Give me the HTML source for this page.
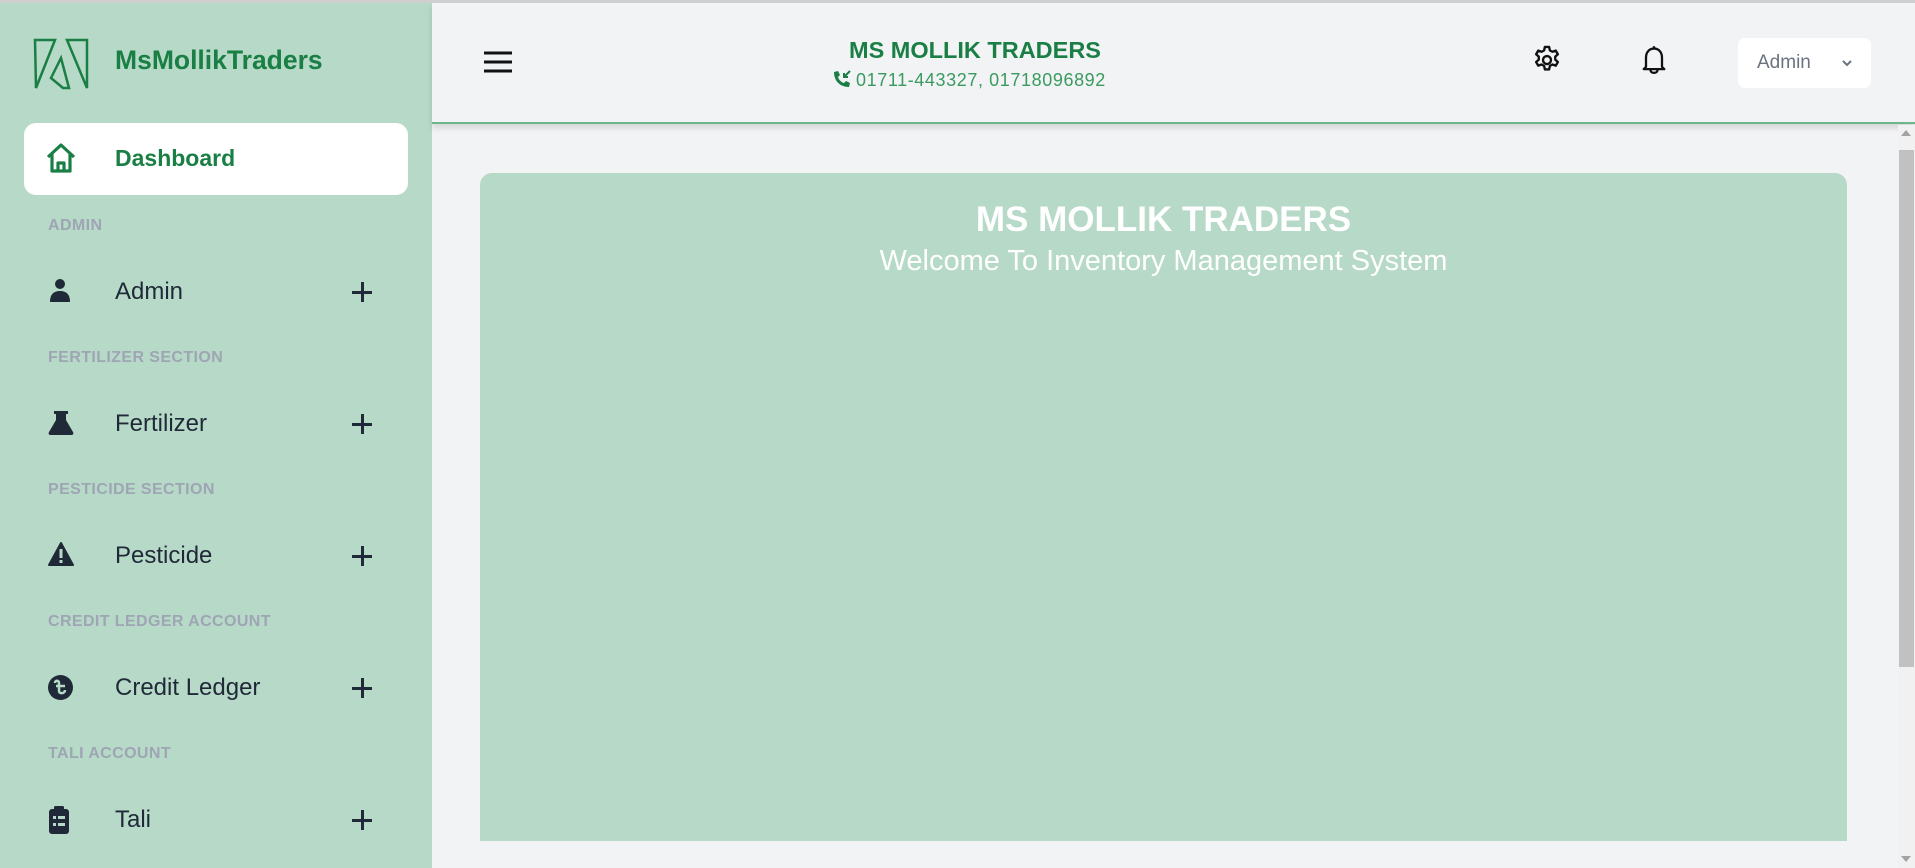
<!DOCTYPE html>
<html><head><meta charset="utf-8"><style>
*{margin:0;padding:0;box-sizing:border-box}
body{width:1915px;height:868px;overflow:hidden;background:#f2f3f5;font-family:"Liberation Sans",sans-serif;position:relative}
.topline{position:absolute;left:0;top:0;width:1915px;height:3px;background:#cfcfcf;z-index:5}
.side{position:absolute;left:0;top:0;width:432px;height:868px;background:#b7d9c8}
.brand{position:absolute;left:115px;top:45px;font-size:26.5px;font-weight:bold;color:#1a7f45}
.dash{position:absolute;left:24px;top:123px;width:384px;height:72px;background:#fff;border-radius:12px}
.dash span{position:absolute;left:91px;top:22px;font-size:23px;font-weight:bold;color:#1a7f45}
.lbl{position:absolute;left:48px;font-size:16px;letter-spacing:.4px;font-weight:bold;color:#9ea5b3}
.item{position:absolute;left:115px;font-size:24px;color:#1f2937}
.plus{position:absolute;left:352px;width:22px;height:22px}
.plus:before{content:"";position:absolute;left:0;top:10px;width:20px;height:2.5px;background:#1f2937}
.plus:after{content:"";position:absolute;left:9px;top:1px;width:2.5px;height:20px;background:#1f2937}
.ic{position:absolute;left:48px}
.head{position:absolute;left:432px;top:3px;width:1483px;height:121px;background:#f2f3f5;border-bottom:2px solid #6bb78a;box-shadow:0 4px 6px rgba(0,0,0,.12)}
.card{position:absolute;left:480px;top:173px;width:1367px;height:668px;background:#b7d9c8;border-radius:12px 12px 0 0;text-align:center;color:#fff}
.sb{position:absolute;left:1898px;top:125px;width:17px;height:743px;background:#f1f1f1}
.thumb{position:absolute;left:1899px;top:150px;width:15px;height:517px;background:#c1c1c1}
</style></head><body>
<div class="topline"></div>
<div class="side">
<svg style="position:absolute;left:33px;top:38px" width="57" height="52" viewBox="0 0 57 52" fill="none" stroke="#1a7f45" stroke-width="2.5"><path d="M2 2H22L3 50Z"/><path d="M34 2H54V50Z"/><path d="M18 40L28 20L36 50H30Z"/></svg>
<div class="brand">MsMollikTraders</div>
<div class="dash">
<svg style="position:absolute;left:21px;top:19px" width="32" height="32" viewBox="0 0 32 32" fill="none" stroke="#1a7f45" stroke-width="3.2" stroke-linejoin="round"><path d="M3 15L16 3L29 15M7 12V29H25V12M13 29V21H19V29"/></svg>
<span>Dashboard</span></div>

<div class="lbl" style="top:217px">ADMIN</div>
<svg class="ic" style="top:278px" width="24" height="24" viewBox="0 0 24 24" fill="#1f2937"><circle cx="12" cy="6" r="5"/><path d="M2 24C2 16 6 13 12 13S22 16 22 24Z"/></svg>
<div class="item" style="top:278px">Admin</div><div class="plus" style="top:281px"></div>

<div class="lbl" style="top:349px">FERTILIZER SECTION</div>
<svg class="ic" style="top:410px" width="26" height="26" viewBox="0 0 26 26" fill="#1f2937"><path d="M6 1H20V4H18V10L25 22C26 24 25 25 23 25H3C1 25 0 24 1 22L8 10V4H6Z"/></svg>
<div class="item" style="top:410px">Fertilizer</div><div class="plus" style="top:413px"></div>

<div class="lbl" style="top:481px">PESTICIDE SECTION</div>
<svg class="ic" style="top:542px" width="26" height="24" viewBox="0 0 26 24"><path d="M13 1L25 23H1Z" fill="#1f2937" stroke="#1f2937" stroke-width="2" stroke-linejoin="round"/><rect x="11.5" y="7" width="3" height="9" fill="#b7d9c8"/><rect x="11.5" y="18" width="3" height="3" fill="#b7d9c8"/></svg>
<div class="item" style="top:542px">Pesticide</div><div class="plus" style="top:545px"></div>

<div class="lbl" style="top:613px">CREDIT LEDGER ACCOUNT</div>
<svg class="ic" style="top:675px" width="25" height="25" viewBox="0 0 25 25"><circle cx="12.5" cy="12.5" r="12.5" fill="#1f2937"/><path d="M7 8C7 5 11 5 11 8V16C11 19 17 19 17 15M8 11H17" stroke="#b7d9c8" stroke-width="2.5" fill="none"/></svg>
<div class="item" style="top:674px">Credit Ledger</div><div class="plus" style="top:677px"></div>

<div class="lbl" style="top:745px">TALI ACCOUNT</div>
<svg class="ic" style="top:806px" width="22" height="28" viewBox="0 0 22 28"><rect x="1" y="3" width="20" height="25" rx="3" fill="#1f2937"/><rect x="6" y="0" width="10" height="5" rx="1.5" fill="#1f2937"/><g fill="#b7d9c8"><rect x="5" y="10" width="3" height="3"/><rect x="10" y="10" width="7" height="3"/><rect x="5" y="17" width="3" height="3"/><rect x="10" y="17" width="7" height="3"/></g></svg>
<div class="item" style="top:806px">Tali</div><div class="plus" style="top:809px"></div>
</div>

<div class="head">
<svg style="position:absolute;left:52px;top:48px" width="28" height="22" viewBox="0 0 28 22" stroke="#111" stroke-width="3"><path d="M0 2H28M0 11H28M0 20H28"/></svg>
<div style="position:absolute;left:393px;width:300px;top:34px;text-align:center;font-size:23.5px;font-weight:bold;color:#1a7f45">MS MOLLIK TRADERS</div>
<div style="position:absolute;left:400px;top:66px;font-size:18px;letter-spacing:.6px;color:#3a9a5f;white-space:nowrap"><svg width="20" height="20" viewBox="0 0 20 20" style="vertical-align:-3px;margin-right:4px"><path d="M2 3C2 12 8 18 17 18L18 14L14 12L12 14C9 13 7 11 6 8L8 6L6 2Z" fill="#1a7f45"/><path d="M18 2L12 8M12 4V8H16" stroke="#1a7f45" stroke-width="2" fill="none"/></svg>01711-443327, 01718096892</div>
<svg style="position:absolute;left:1100px;top:41px" width="30" height="32" viewBox="0 0 24 24" fill="none" stroke="#111" stroke-width="1.9" stroke-linejoin="round"><path d="M10.3 1.5h3.4l.6 2.8 2 1.1 2.7-.9 1.7 2.9-2.1 1.9v2.4l2.1 1.9-1.7 2.9-2.7-.9-2 1.1-.6 2.8h-3.4l-.6-2.8-2-1.1-2.7.9-1.7-2.9 2.1-1.9V9.3L3.3 7.4 5 4.5l2.7.9 2-1.1z"/><circle cx="12" cy="12" r="3.2"/></svg>
<svg style="position:absolute;left:1208px;top:41px" width="28" height="32" viewBox="0 0 24 28" fill="none" stroke="#111" stroke-width="2" stroke-linejoin="round"><path d="M12 2V4M5 20V12C5 7 8 4 12 4S19 7 19 12V20L21 22H3Z M9 23C9 26 15 26 15 23"/></svg>
<div style="position:absolute;left:1306px;top:35px;width:133px;height:50px;background:#fff;border-radius:7px"><span style="position:absolute;left:19px;top:14px;font-size:19px;color:#6b7280">Admin</span><svg style="position:absolute;left:103px;top:21px" width="12" height="8" viewBox="0 0 12 8" fill="none" stroke="#6b7280" stroke-width="2"><path d="M2 2L6 6L10 2"/></svg></div>
</div>

<div class="card">
<div style="margin-top:27px;font-size:35px;font-weight:bold">MS MOLLIK TRADERS</div>
<div style="margin-top:5px;font-size:29px">Welcome To Inventory Management System</div>
</div>
<div class="sb"></div><div class="thumb"></div>
<div style="position:absolute;left:1901px;top:130px;width:0;height:0;border-left:5px solid transparent;border-right:5px solid transparent;border-bottom:6px solid #a3a3a3"></div>
<div style="position:absolute;left:1901px;top:856px;width:0;height:0;border-left:5px solid transparent;border-right:5px solid transparent;border-top:6px solid #a3a3a3"></div>
</body></html>
